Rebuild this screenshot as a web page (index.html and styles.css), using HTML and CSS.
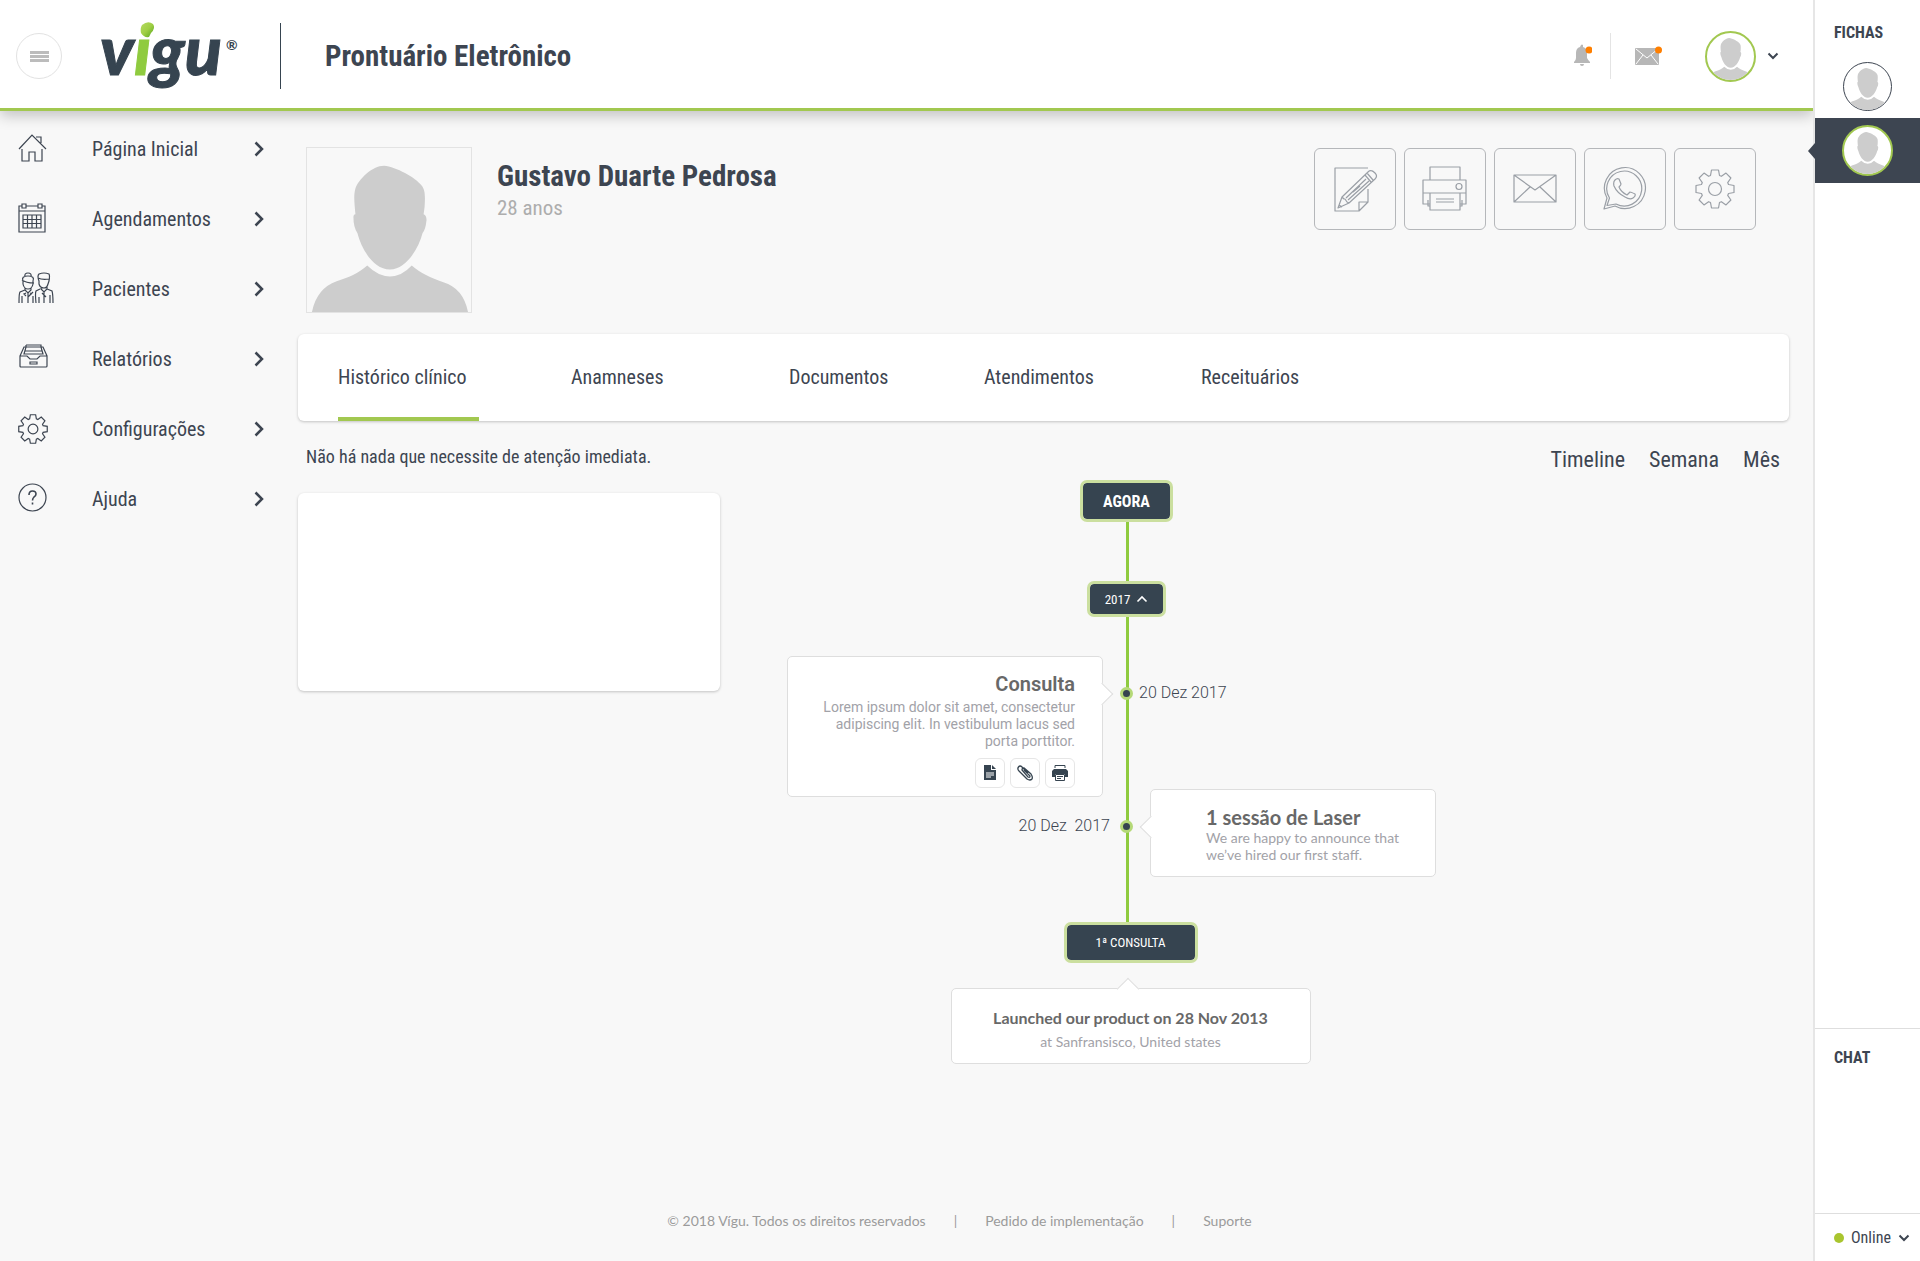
FILE: index.html
```html
<!DOCTYPE html>
<html lang="pt-BR">
<head>
<meta charset="utf-8">
<meta name="viewport" content="width=device-width, initial-scale=1">
<title>Vigu - Prontuário Eletrônico</title>
<link rel="stylesheet" href="styles.css">
</head>
<body>
<svg class="sprite" aria-hidden="true">
  <symbol id="person" viewBox="0 0 166 166">
    <path d="M78 18C90 19 110 30 116 38C119 42 120 46 119 60L118 67Q121 68 121 73Q120 83 117 86C113 102 100 123 84 123C67 123 55 102 51 86Q47 80 47 70Q47 67 49 67C48 55 47 48 49 41C52 32 66 18 78 18Z"/>
    <path d="M5 166Q10 142 30 135C42 131 52 127 61 119Q72 130 84 130Q96 130 106 119C115 127 125 131 138 136Q158 142 163 166Z"/>
  </symbol>
  <symbol id="gear" viewBox="-20 -20 40 40">
    <path d="M-4.5-13.5L-3.5-19L3.5-19L4.5-13.5L6.4-12.7L11-15.9L15.9-11L12.7-6.4L13.5-4.5L19-3.5L19 3.5L13.5 4.5L12.7 6.4L15.9 11L11 15.9L6.4 12.7L4.5 13.5L3.5 19L-3.5 19L-4.5 13.5L-6.4 12.7L-11 15.9L-15.9 11L-12.7 6.4L-13.5 4.5L-19 3.5L-19-3.5L-13.5-4.5L-12.7-6.4L-15.9-11L-11-15.9L-6.4-12.7Z"/>
    <circle r="6.500"/>
  </symbol>
  <symbol id="chevron-right" viewBox="0 0 10 16"><path d="M1.500 1.500L8 8L1.500 14.500"/></symbol>
  <symbol id="chevron-down" viewBox="0 0 12 8"><path d="M1.500 1.500L6 6L10.500 1.500"/></symbol>
</svg>

<div class="app">
  <div class="workspace">
    <header class="topbar">
      <button class="menu-button" aria-label="Menu"><span></span><span></span><span></span></button>
      <a class="logo" href="#" aria-label="Vigu">
        <svg width="136" height="70" viewBox="0 0 136 70">
          <defs><linearGradient id="leaf" x1="0" x2="1" y1="0" y2="1"><stop offset="0" stop-color="#b5da62"/><stop offset=".5" stop-color="#a0cf45"/><stop offset="1" stop-color="#55a51c"/></linearGradient></defs>
          <text class="logo-text" x="-2" y="54">v</text>
          <text class="logo-text logo-green" x="32" y="54">ı</text>
          <text class="logo-text" x="48" y="54">gu</text>
          <path fill="url(#leaf)" d="M40 4Q46-1 51 3Q54 7 49 12L47 16Q42 17 39 12Q38 7 40 4Z"/>
          <text class="logo-mark" x="124" y="29">®</text>
        </svg>
      </a>
      <h1 class="page-title">Prontuário Eletrônico</h1>
      <div class="topbar-tools">
        <button class="tool tool-bell" aria-label="Notificações">
          <svg width="20" height="24" viewBox="0 0 20 24"><path fill="#b7b7b7" d="M9 1Q10 0 11 1L11 3Q15 4 15 9V14Q16 16 18 18V19H2V18Q4 16 4 14V9Q4 4 8 3ZM8 20H12Q12 22 10 22Q8 22 8 20Z"/><circle cx="17" cy="6" r="3.500" fill="#ff7f00"/></svg>
        </button>
        <button class="tool tool-mail" aria-label="Mensagens">
          <svg width="28" height="24" viewBox="0 0 28 24"><rect y="4" width="24" height="17" rx="1" fill="#b7b7b7"/><path d="M1 5L12 14L23 5M1 20L8 11M23 20L16 11" fill="none" stroke="#fff"/><circle cx="23.500" cy="6" r="3.500" fill="#ff7f00"/></svg>
        </button>
        <button class="account" aria-label="Conta">
          <span class="avatar avatar-active"><svg><use href="#person"/></svg></span>
          <svg class="chevron-down"><use href="#chevron-down"/></svg>
        </button>
      </div>
    </header>

    <div class="columns">
      <nav class="side-nav" aria-label="Principal">
        <a href="#"><svg class="nav-icon" viewBox="0 0 36 36"><path d="M1 18L14 4L28 18M18 6H23V12M4 18V30H11V21H17V30H24V18"/></svg><span>Página Inicial</span><svg class="nav-arrow"><use href="#chevron-right"/></svg></a>
        <a href="#"><svg class="nav-icon" viewBox="0 0 36 36"><path d="M4 5H1V31H27V5H24M8 5H20M1 10H27M4 3H8V7H4ZM20 3H24V7H20ZM5 14H23V27H5ZM9.500 14V27M14 14V27M18.500 14V27M5 18.500H23M5 22.500H23"/></svg><span>Agendamentos</span><svg class="nav-arrow"><use href="#chevron-right"/></svg></a>
        <a href="#"><svg class="nav-icon" viewBox="0 0 36 36"><path d="M7 6Q6 2 10 2Q14 2 13 6M5 10Q3 5 10 5Q17 5 15 10L15 13Q14 18 10 18Q6 18 5 13ZM4 9Q8 12 16 12M7 17V19L10 22L13 19V17M7 19L2 21Q1 22 1 32M4 25V32M10 22V32M8 22L6 23L8 25M12 22L14 23M10 26L15 21M15 25V32M21 10Q19 5 21 3Q26 1 31 3Q32 5 31 10L30 13Q29 17 26 17Q22 17 21 13ZM20 7Q24 9 31 8M23 16V18L26 21L29 18V16M22 18L18 20Q17 22 18 32M29 18L34 20Q35 23 35 32M26 21V32M32 24V32M24 22L28 26M21 26V32"/></svg><span>Pacientes</span><svg class="nav-arrow"><use href="#chevron-right"/></svg></a>
        <a href="#"><svg class="nav-icon" viewBox="0 0 36 36"><path d="M2 15L6 6H25L29 15V25Q29 26 28 26H3Q2 26 2 25ZM2 15H9L12 18H19L22 15H29M6 13H25L23 6H8ZM8 4H23V6M8 4V6M7 10H24M12 21H19V23H12Z"/></svg><span>Relatórios</span><svg class="nav-arrow"><use href="#chevron-right"/></svg></a>
        <a href="#"><svg class="nav-icon nav-gear"><use href="#gear"/></svg><span>Configurações</span><svg class="nav-arrow"><use href="#chevron-right"/></svg></a>
        <a href="#"><svg class="nav-icon" viewBox="0 0 36 36"><circle cx="14.500" cy="16.500" r="13.500"/><path d="M11 14Q11 10 14.500 10Q18 10 18 13Q18 15 16 16Q14.500 17.500 14.500 19.500" class="bold"/><path class="bold" d="M14.500 21.500V23.500"/></svg><span>Ajuda</span><svg class="nav-arrow"><use href="#chevron-right"/></svg></a>
      </nav>

      <main class="content">
        <section class="profile">
          <div class="photo"><svg><use href="#person"/></svg></div>
          <div class="identity">
            <h2>Gustavo Duarte Pedrosa</h2>
            <p>28 anos</p>
          </div>
          <div class="actions">
            <button aria-label="Editar"><svg viewBox="0 0 46 46"><path d="M36 2H3V45H27L36 36V23M27 45V36H36M6 42L10 31L36 6Q39 3 43 7Q46 10 43 13L17 37ZM10 31L12 33L13 33L15 36L17 37M7 39L10 41M33 9L39 16M35 7L41 14M14 32L34 13M16 34L37 15M21 26L28 20"/></svg></button>
            <button aria-label="Imprimir"><svg viewBox="0 0 46 46"><path d="M8 14V1H38V14M1 14H44V27H1ZM1 27V38H8M44 27V38H38M8 27H38V44H8ZM14 33H32M14 36H32M6 34V40H8M40 34V40H38"/><circle cx="37" cy="20.500" r="3"/></svg></button>
            <button aria-label="Enviar e-mail"><svg viewBox="0 0 46 46"><path d="M2 9H44V36H2ZM2 9L23 24L44 9M2 36L18 21M44 36L28 21"/></svg></button>
            <button aria-label="WhatsApp"><svg viewBox="0 0 46 46"><path d="M2 43L5 32A20.500 20.500 0 1 1 13 40ZM5 39.500L7.500 32A17.500 17.500 0 1 1 14 38ZM13 14Q15 12 17 13L19 18Q19 19 17 21Q19 26 25 29L28 26Q29 26 33 28Q34 30 31 32Q28 34 23 31Q15 27 12 20Q11 16 13 14Z"/></svg></button>
            <button aria-label="Configurar"><svg class="action-gear"><use href="#gear"/></svg></button>
          </div>
        </section>

        <nav class="tabs" aria-label="Prontuário">
          <a class="current" href="#">Histórico clínico</a>
          <a href="#">Anamneses</a>
          <a href="#">Documentos</a>
          <a href="#">Atendimentos</a>
          <a href="#">Receituários</a>
        </nav>

        <div class="history">
          <section class="alerts">
            <p>Não há nada que necessite de atenção imediata.</p>
            <div class="blank-card"></div>
          </section>

          <section class="timeline">
            <div class="badge badge-now">AGORA</div>
            <button class="badge badge-year">2017 <svg viewBox="0 0 12 8"><path d="M1.500 6.500L6 2L10.500 6.500"/></svg></button>
            <article class="entry">
              <div class="card card-left">
                <h3>Consulta</h3>
                <p>Lorem ipsum dolor sit amet, consectetur adipiscing elit. In vestibulum lacus sed porta porttitor.</p>
                <div class="card-actions">
                  <button aria-label="Documento"><svg viewBox="0 0 16 16"><path fill="#364450" d="M2 0H9V5H14V15H2ZM10 0L14 4H10Z"/><path d="M4 8H12M4 10H12M4 12H9" stroke="#fff"/></svg></button>
                  <button aria-label="Anexo"><svg viewBox="0 0 16 16"><path fill="none" stroke="#364450" stroke-width="1.300" d="M11 8L5 2Q3 0 1.500 2Q0 4 2 6L10 14Q13 16 15 14Q16 12 14 9L7 3Q5 3 5 5L11 12Q13 13 13 11L7 5"/></svg></button>
                  <button aria-label="Imprimir"><svg viewBox="0 0 16 16"><path fill="none" stroke="#364450" d="M3 3V.5H13V3"/><path fill="#364450" d="M2 4H14L16 6V12H13V9H3V12H0V6Z"/><path fill="#fff" stroke="#364450" d="M3.500 9.500H12.500V15.500H3.500Z"/><path stroke="#364450" d="M5 11.500H11M5 13.500H9"/></svg></button>
                </div>
              </div>
              <span class="dot"></span>
              <time class="date-right">20 Dez 2017</time>
            </article>
            <article class="entry entry-overlap">
              <time class="date-left">20 Dez &nbsp;2017</time>
              <span class="dot"></span>
              <div class="card card-right">
                <h3>1 sessão de Laser</h3>
                <p>We are happy to announce that we’ve hired our first staff.</p>
              </div>
            </article>
            <div class="origin">
              <div class="badge badge-first">1ª CONSULTA</div>
              <article class="card card-bottom">
                <h3>Launched our product on 28 Nov 2013</h3>
                <p>at Sanfransisco, United states</p>
              </article>
            </div>
          </section>

          <nav class="views" aria-label="Visualização">
            <a href="#">Timeline</a>
            <a href="#">Semana</a>
            <a href="#">Mês</a>
          </nav>
        </div>
      </main>
    </div>

    <footer class="footer">
      <span>© 2018 Vígu. Todos os direitos reservados</span>
      <span>|</span>
      <a href="#">Pedido de implementação</a>
      <span>|</span>
      <a href="#">Suporte</a>
    </footer>
  </div>

  <aside class="dock">
    <section class="records">
      <h2>FICHAS</h2>
      <a class="record" href="#" aria-label="Ficha 1"><span class="avatar"><svg><use href="#person"/></svg></span></a>
      <a class="record record-active" href="#" aria-label="Ficha 2"><span class="avatar avatar-active"><svg><use href="#person"/></svg></span></a>
    </section>
    <section class="chat"><h2>CHAT</h2></section>
    <button class="status"><span class="status-dot"></span>Online<svg class="chevron-down"><use href="#chevron-down"/></svg></button>
  </aside>
</div>
</body>
</html>
```
FILE: styles.css
```css
:root {
  --ink: #3d4551;
  --slate: #364450;
  --green: #a2c850;
  --line-green: #8fcb3f;
  --pale-green: #cbdf9f;
  --border: #dedede;
  --condensed: "Roboto Condensed", Roboto, sans-serif;
}
* { box-sizing: border-box; }
body { margin: 0; background: #f8f8f8; color: var(--ink); font-family: var(--condensed); font-size: 20px; }
h1, h2, h3, p { margin: 0; }
a { color: inherit; text-decoration: none; }
button { padding: 0; border: 0; background: none; color: inherit; font: inherit; cursor: pointer; }
svg { display: block; fill: none; }
.sprite { position: absolute; width: 0; height: 0; }

.app { display: flex; min-height: 100vh; }
.workspace { flex: 1; min-width: 0; display: flex; flex-direction: column; }

.topbar { display: flex; align-items: center; height: 111px; padding: 4px 34px 0 16px; background: #fff; border-bottom: 3px solid var(--green); box-shadow: 0 4px 14px rgba(0, 0, 0, .24); }
.menu-button { display: flex; flex-direction: column; align-items: center; justify-content: center; gap: 1px; width: 46px; height: 46px; border: 1px solid #e2e2e2; border-radius: 50%; }
.menu-button span { width: 19px; height: 3px; background: #bcbcbc; }
.logo { margin-left: 40px; }
.logo svg { overflow: visible; }
.logo-text { font: italic 900 68px Lato, sans-serif; fill: var(--slate); stroke: var(--slate); stroke-width: 1; }
.logo-green { fill: #8fcb3f; stroke: #8fcb3f; }
.logo-mark { font: 700 14px Lato, sans-serif; fill: var(--slate); }
.page-title { margin-left: 42px; padding-left: 44px; border-left: 1px solid var(--slate); font-size: 29px; line-height: 66px; font-weight: 700; }
.topbar-tools { display: flex; align-items: center; margin-left: auto; }
.tool { display: flex; align-items: center; height: 46px; }
.tool-bell { padding-right: 18px; border-right: 1px solid #e4e4e4; }
.tool-mail { padding-left: 24px; }
.account { display: flex; align-items: center; gap: 11px; margin-left: 42px; }
.chevron-down { width: 12px; height: 8px; stroke: var(--ink); stroke-width: 2; }

.avatar { display: block; width: 49px; height: 49px; overflow: hidden; border: 1px solid var(--ink); border-radius: 50%; background: #fff; }
.avatar svg { width: 100%; height: 100%; fill: #cdcdcd; }
.avatar-active { width: 51px; height: 51px; border: 2px solid var(--green); }

.columns { display: flex; flex: 1; }
.side-nav { flex: 0 0 298px; padding: 3px 34px 0 18px; }
.side-nav a { display: flex; align-items: center; height: 70px; }
.side-nav span { flex: 1; padding-left: 38px; }
.nav-icon { width: 36px; height: 36px; stroke: var(--ink); stroke-width: 1.2; }
.nav-icon .bold { stroke-width: 1.6; }
.nav-gear { width: 30px; height: 30px; margin-right: 6px; stroke-width: 1.6; }
.nav-arrow { width: 10px; height: 16px; stroke: var(--ink); stroke-width: 2.5; }

.content { flex: 1; min-width: 0; padding: 36px 24px 0 0; }
.profile { display: flex; align-items: flex-start; padding: 0 33px 0 8px; }
.photo { width: 166px; height: 166px; border: 1px solid #e3e3e3; }
.photo svg { width: 100%; height: 100%; fill: #cdcdcd; }
.identity { padding: 11px 0 0 25px; }
.identity h2 { font-size: 29px; line-height: 36px; font-weight: 700; }
.identity p { font-size: 21px; line-height: 28px; color: #adadad; }
.actions { display: flex; gap: 8px; margin-left: auto; padding-top: 1px; }
.actions button { display: grid; place-items: center; width: 82px; height: 82px; border: 1px solid #b5b7ba; border-radius: 6px; }
.actions svg { width: 46px; height: 46px; stroke: #9a9fa6; stroke-width: 1.2; stroke-linejoin: round; }
.actions .action-gear { width: 40px; height: 40px; }

.tabs, .blank-card { background: #fff; border-radius: 6px; box-shadow: 0 1px 3px rgba(0, 0, 0, .22); }
.tabs { display: grid; grid-template-columns: 233px 218px 195px 217px auto; height: 87px; margin-top: 21px; padding: 0 40px; }
.tabs a { justify-self: start; padding-top: 4px; line-height: 79px; border-bottom: 4px solid transparent; }
.tabs .current { padding-right: 12px; border-color: var(--green); }

.history { display: grid; grid-template-columns: 422px minmax(0, 765px) 1fr; column-gap: 24px; }
.alerts p { padding: 24px 8px; font-size: 18px; line-height: 24px; }
.blank-card { height: 198px; }
.views { display: flex; justify-content: flex-end; gap: 24px; padding: 24px 9px 0 0; font-size: 22px; line-height: 30px; }

.timeline { position: relative; display: flex; flex-direction: column; align-items: center; padding-top: 59px; }
.timeline::before { content: ""; position: absolute; top: 62px; left: 50%; width: 3px; height: 444px; margin-left: -1px; background: var(--line-green); }
.badge { position: relative; display: flex; align-items: center; justify-content: center; border: 3px solid var(--pale-green); border-radius: 7px; background: var(--slate); background-clip: padding-box; color: #fff; font-size: 13px; }
.badge-now { width: 93px; height: 42px; font-size: 16px; font-weight: 700; }
.badge-year { gap: 6px; width: 79px; height: 36px; margin-top: 59px; }
.badge-year svg { width: 12px; height: 8px; stroke: #fff; stroke-width: 1.6; }
.badge-first { width: 134px; height: 41px; }

.entry { position: relative; display: grid; grid-template-columns: 1fr 13px 1fr; align-items: start; width: 100%; margin-top: 39px; }
.entry-overlap { margin-top: -8px; }
.dot { width: 13px; height: 13px; margin-top: 31px; border: 3px solid #b5d978; border-radius: 50%; background: var(--slate); }
.entry time { margin-top: 25px; font: 300 16px/24px Roboto, sans-serif; }
.date-right { padding-left: 6px; }
.date-left { padding-right: 10px; text-align: right; }

.card { position: relative; border: 1px solid var(--border); border-radius: 5px; background: #fff; color: #a2a2a8; font: 14px/17px Roboto, sans-serif; }
.card h3 { color: #686868; font-size: 20px; line-height: 24px; }
.card::before { content: ""; position: absolute; width: 15px; height: 15px; border: solid var(--border); border-width: 1px 1px 0 0; background: #fff; }
.card-left { justify-self: end; width: 316px; margin-right: 17px; padding: 15px 27px 8px; text-align: right; }
.card-left h3 { margin-bottom: 3px; font-weight: 600; }
.card-left::before { top: 29px; right: -8px; transform: rotate(45deg); }
.card-actions { display: flex; justify-content: flex-end; gap: 5px; margin-top: 8px; }
.card-actions button { display: grid; place-items: center; width: 30px; height: 30px; border: 1px solid #e6e6e6; border-radius: 6px; }
.card-actions svg { width: 16px; height: 16px; }
.card-right { width: 286px; margin-left: 17px; padding: 15px 24px 13px 55px; }
.card-right::before { top: 29px; left: -8px; transform: rotate(225deg); }
.card-right, .card-bottom { font-family: Lato, sans-serif; }
.origin { display: flex; flex-direction: column; align-items: center; margin-top: 45px; padding-left: 8px; }
.card-bottom { width: 360px; margin-top: 25px; padding: 17px 24px 9px; text-align: center; line-height: 24px; }
.card-bottom h3 { font-size: 16px; }
.card-bottom::before { top: -8px; left: 168px; transform: rotate(-45deg); }

.footer { display: flex; justify-content: center; gap: 28px; padding: 28px 0 28px 106px; color: #9b9b9b; font: 14px/24px Lato, sans-serif; }

.dock { display: flex; flex: 0 0 107px; flex-direction: column; background: #fff; border-left: 2px solid #e6e6e6; }
.dock h2 { padding-left: 19px; font-size: 16px; line-height: 24px; font-weight: 700; }
.records { flex: 1; padding-top: 21px; }
.record { display: grid; place-items: center; height: 65px; }
.record:first-of-type { height: 49px; margin: 17px 0 7px; }
.record-active { position: relative; background: var(--ink); }
.record-active::before { content: ""; position: absolute; top: 25px; left: -7px; border: solid transparent; border-width: 8px 7px 8px 0; border-right-color: var(--ink); }
.chat { height: 185px; padding-top: 17px; border-top: 1px solid var(--border); }
.status { display: flex; align-items: center; height: 48px; padding-left: 19px; border-top: 1px solid var(--border); font-size: 16px; }
.status-dot { width: 10px; height: 10px; margin-right: 7px; border-radius: 50%; background: #a9c52f; }
.status .chevron-down { margin-left: 7px; }
```
